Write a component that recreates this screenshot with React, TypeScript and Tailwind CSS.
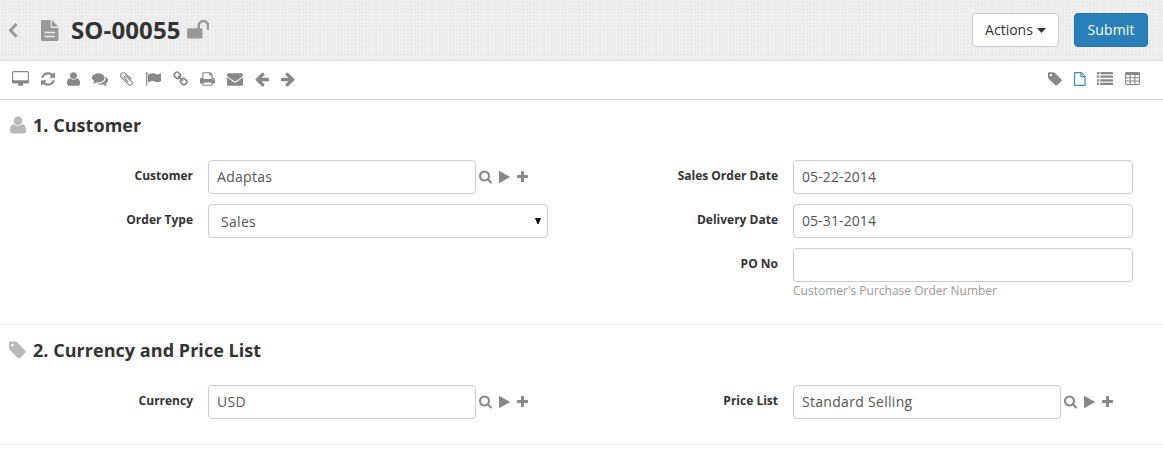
import type { ReactNode } from "react";

type IconProps = { box: string; size: string; children: ReactNode };

function Icon({ box, size, children }: IconProps) {
  return (
    <svg viewBox={box} preserveAspectRatio="none" fill="currentColor" className={`shrink-0 ${size}`}>
      {children}
    </svg>
  );
}

const userShape = (
  <path
    transform="translate(0 1536) scale(1 -1)"
    d="M1408 131q0-120-73-189.5t-194-69.5h-874q-121 0-194 69.5t-73 189.5q0 53 3.5 103.5t14 109t26.5 108.5t43 97.5t62 81t85.5 53.5t111.5 20q9 0 42-21.5t74.5-48t108-48t133.5-21.5t133.5 21.5t108 48t74.5 48t42 21.5q61 0 111.5-20t85.5-53.5t62-81t43-97.5t26.5-108.5t14-109t3.5-103.5zM1088 1024q0-159-112.5-271.5t-271.5-112.5t-271.5 112.5t-112.5 271.5t112.5 271.5t271.5 112.5t271.5-112.5t112.5-271.5z"
  />
);
const tagShape = (
  <path d="M576 448q0-53-37.5-90.5t-90.5-37.5-90.5 37.5-37.5 90.5 37.5 90.5 90.5 37.5 90.5-37.5 37.5-90.5zm1067 576q0 53-37 90l-491 492q-39 37-91 37-53 0-90-37l-715-716q-38-37-64.5-101t-26.5-117v-416q0-52 38-90t90-38h416q53 0 117 26.5t102 64.5l715 714q37 39 37 91z" />
);

function ToolbarLeft() {
  return (
    <div className="flex gap-3 text-[#888]">
      <Icon box="-64 0 1920 1792" size="w-[17px] h-4">
        <path d="M1728 992v-832q0-13-9.5-22.5t-22.5-9.5h-1600q-13 0-22.5 9.5t-9.5 22.5v832q0 13 9.5 22.5t22.5 9.5h1600q13 0 22.5-9.5t9.5-22.5zm128-832v1088q0 66-47 113t-113 47h-544q0 37 16 77.5t32 71 16 43.5q0 26-19 45t-45 19h-512q-26 0-45-19t-19-45q0-14 16-44t32-70 16-78h-544q-66 0-113-47t-47-113v-1088q0-66 47-113t113-47h1600q66 0 113 47t47 113z" />
      </Icon>
      <Icon box="128 0 1536 1792" size="w-[14px] h-4">
        <path d="M1639 1056q0 5-1 7-64 268-268 434.5t-478 166.5q-146 0-282.5-55t-243.5-157l-129 129q-19 19-45 19t-45-19-19-45v-448q0-26 19-45t45-19h448q26 0 45 19t19 45-19 45l-137 137q71 66 161 102t187 36q134 0 250-65t186-179q11-17 53-117 8-23 30-23h192q13 0 22.5 9.5t9.5 22.5zm25-800v448q0 26-19 45t-45 19h-448q-26 0-45-19t-19-45 19-45l138-138q-148-137-349-137-134 0-250 65t-186 179q-11 17-53 117-8 23-30 23h-199q-13 0-22.5-9.5t-9.5-22.5v-7q65-268 270-434.5t480-166.5q146 0 284 55.5t245 156.5l130-129q19-19 45-19t45 19 19 45z" />
      </Icon>
      <Icon box="0 0 1408 1792" size="w-[13px] h-4">{userShape}</Icon>
      <Icon box="0 0 1792 1792" size="w-4 h-4">
        <path d="M1408 768q0 139-94 257t-256.5 186.5-353.5 68.5q-86 0-176-16-124 88-278 128-36 9-86 16h-3q-11 0-20.5-8t-11.5-21q-1-3-1-6.5t.5-6.5 2-6l2.5-5 3.5-5.5 4-5 4.5-5 4-4.5q5-6 23-25t26-29.5 22.5-29 25-38.5 20.5-44q-124-72-195-177t-71-224q0-139 94-257t256.5-186.5 353.5-68.5 353.5 68.5 256.5 186.5 94 257zm384 256q0 120-71 224.5t-195 176.5q10 24 20.5 44t25 38.5 22.5 29 26 29.5 23 25q1 1 4 4.5t4.5 5 4 5 3.5 5.5l2.5 5 2 6 .5 6.5-1 6.5q-3 14-13 22t-22 7q-50-7-86-16-154-40-278-128-90 16-176 16-271 0-472-132 58 4 88 4 161 0 309-45t264-129q125-92 192-212t67-254q0-77-23-152 129 71 204 178t75 230z" />
      </Icon>
      <Icon box="192 0 1408 1792" size="w-[13px] h-4">
        <path d="M1596 1385q0 117-79 196t-196 79q-135 0-235-100l-777-776q-113-115-113-271 0-159 110-270t269-111q158 0 273 113l605 606q10 10 10 22 0 16-30.5 46.5t-46.5 30.5q-13 0-23-10l-606-607q-79-77-181-77-106 0-179 75t-73 181q0 105 76 181l776 777q63 63 145 63 64 0 106-42t42-106q0-82-63-145l-581-581q-26-24-60-24-29 0-48 19t-19 48q0 32 25 59l410 410q10 10 10 22 0 16-31 47t-47 31q-12 0-22-10l-410-410q-63-61-63-149 0-82 57-139t139-57q88 0 149 63l581 581q100 98 100 235z" />
      </Icon>
      <Icon box="0 0 1792 1792" size="w-4 h-4">
        <path d="M320 256q0 72-64 110v1266q0 13-9.5 22.5t-22.5 9.5h-64q-13 0-22.5-9.5t-9.5-22.5v-1266q-64-38-64-110 0-53 37.5-90.5t90.5-37.5 90.5 37.5 37.5 90.5zm1472 64v763q0 25-12.5 38.5t-39.5 27.5q-215 116-369 116-61 0-123.5-22t-108.5-48-115.5-48-142.5-22q-192 0-464 146-17 9-33 9-26 0-45-19t-19-45v-742q0-32 31-55 21-14 79-43 236-120 421-120 107 0 200 29t219 88q38 19 88 19 54 0 117.5-21t110-47 88-47 54.5-21q26 0 45 19t19 45z" />
      </Icon>
      <Icon box="64 0 1664 1792" size="w-[15px] h-4">
        <path d="M1520 1216q0-40-28-68l-208-208q-28-28-68-28-42 0-72 32 3 3 19 18.5t21.5 21.5 15 19 13 25.5 3.5 27.5q0 40-28 68t-68 28q-15 0-27.5-3.5t-25.5-13-19-15-21.5-21.5-18.5-19q-33 31-33 73 0 40 28 68l206 207q27 27 68 27 40 0 68-26l147-146q28-28 28-67zm-703-705q0-40-28-68l-206-207q-28-28-68-28-39 0-68 27l-147 146q-28 28-28 67 0 40 28 68l208 208q27 27 68 27 42 0 72-31-3-3-19-18.5t-21.5-21.5-15-19-13-25.5-3.5-27.5q0-40 28-68t68-28q15 0 27.5 3.5t25.5 13 19 15 21.5 21.5 18.5 19q33-31 33-73zm895 705q0 120-85 203l-147 146q-83 83-203 83-121 0-204-85l-206-207q-83-83-83-203 0-123 88-209l-88-88q-86 88-208 88-120 0-204-84l-208-208q-84-84-84-204t85-203l147-146q83-83 203-83 121 0 204 85l206 207q83 83 83 203 0 123-88 209l88 88q86-88 208-88 120 0 204 84l208 208q84 84 84 204z" />
      </Icon>
      <Icon box="64 0 1664 1792" size="w-[15px] h-4">
        <path d="M448 1536h896v-256h-896v256zm0-640h896v-384h-160q-40 0-68-28t-28-68v-160h-640v640zm1152 64q0-26-19-45t-45-19-45 19-19 45 19 45 45 19 45-19 19-45zm128 0v416q0 13-9.5 22.5t-22.5 9.5h-224v160q0 40-28 68t-68 28h-960q-40 0-68-28t-28-68v-160h-224q-13 0-22.5-9.5t-9.5-22.5v-416q0-79 56.5-135.5t135.5-56.5h64v-544q0-40 28-68t68-28h672q40 0 88 20t76 48l152 152q28 28 48 76t20 88v256h64q79 0 135.5 56.5t56.5 135.5z" />
      </Icon>
      <Icon box="0 0 1792 1792" size="w-4 h-4">
        <path d="M1792 710v794q0 66-47 113t-113 47h-1472q-66 0-113-47t-47-113v-794q44 49 101 87 362 246 497 345 57 42 92.5 65.5t94.5 48 110 24.5h2q51 0 110-24.5t94.5-48 92.5-65.5q170-123 498-345 57-39 100-87zm0-294q0 79-49 151t-122 123q-376 261-468 325-10 7-42.5 31t-54 38.5-52 32.5-57.5 27-50 9h-2q-23 0-50-9t-57.5-27-52-32.5-54-38.5-42.5-31q-91-64-262-182.5t-205-142.5q-62-42-117-115.5t-55-136.5q0-78 41.5-130t118.5-52h1472q65 0 112.5 47t47.5 113z" />
      </Icon>
      <Icon box="128 0 1536 1792" size="w-[14px] h-4">
        <path d="M1664 896v128q0 53-32.5 90.5t-84.5 37.5h-704l293 294q38 36 38 90t-38 90l-75 76q-37 37-90 37-52 0-91-37l-651-652q-37-37-37-90 0-52 37-91l651-650q38-38 91-38 52 0 90 38l75 74q38 38 38 91t-38 91l-293 293h704q52 0 84.5 37.5t32.5 90.5z" />
      </Icon>
      <Icon box="128 0 1536 1792" size="w-[14px] h-4">
        <path d="M1600 960q0 54-37 91l-651 651q-39 37-91 37-51 0-90-37l-75-75q-38-38-38-91t38-91l293-293h-704q-52 0-84.5-37.5t-32.5-90.5v-128q0-53 32.5-90.5t84.5-37.5h704l-293-294q-38-36-38-90t38-90l75-75q38-38 90-38 53 0 91 38l651 651q37 35 37 90z" />
      </Icon>
    </div>
  );
}

function ToolbarRight() {
  return (
    <div className="flex gap-3 text-[#888]">
      <Icon box="128 0 1536 1792" size="w-[14px] h-4">{tagShape}</Icon>
      <Icon box="0 0 11 16" size="w-[11px] h-4 text-[#428bca] overflow-visible">
        <path
          fillRule="evenodd"
          d="M.6 1H7.6L11.6 5V14.4Q11.6 15 11 15H.6Q0 15 0 14.4V1.6Q0 1 .6 1ZM1.2 2.2V13.8H10.4V6.2H7Q6.4 6.2 6.4 5.6V2.2ZM7.6 2.4V5H10.2Z"
        />
      </Icon>
      <Icon box="0 0 16 16" size="w-4 h-4">
        {[1, 4.6, 8.2, 11.8].map((y) => (
          <g key={y}>
            <rect x="0" y={y} width="2.3" height="2.2" rx=".2" />
            <rect x="3.4" y={y} width="12.6" height="2.2" rx=".2" />
          </g>
        ))}
      </Icon>
      <Icon box="0 0 15 16" size="w-[15px] h-4">
        <path
          fillRule="evenodd"
          d="M1.4 1H13.6Q15 1 15 2.4V12.6Q15 14 13.6 14H1.4Q0 14 0 12.6V2.4Q0 1 1.4 1ZM1.1 4V6.2H4.6V4ZM5.7 4V6.2H9.3V4ZM10.4 4V6.2H13.9V4ZM1.1 7.3V9.5H4.6V7.3ZM5.7 7.3V9.5H9.3V7.3ZM10.4 7.3V9.5H13.9V7.3ZM1.1 10.6V12.9H4.6V10.6ZM5.7 10.6V12.9H9.3V10.6ZM10.4 10.6V12.9H13.9V10.6Z"
        />
      </Icon>
    </div>
  );
}

function LinkButtons() {
  return (
    <div className="ml-[3px] flex gap-[7px] text-[#888]">
      <Icon box="64 0 1664 1792" size="w-[13px] h-[14px]">
        <path
          transform="translate(0 -64)"
          d="M1216 832q0-185-131.5-316.5t-316.5-131.5-316.5 131.5-131.5 316.5 131.5 316.5 316.5 131.5 316.5-131.5 131.5-316.5zm512 832q0 52-38 90t-90 38q-54 0-90-38l-343-342q-179 124-399 124-143 0-273.5-55.5t-225-150-150-225-55.5-273.5 55.5-273.5 150-225 225-150 273.5-55.5 273.5 55.5 225 150 150 225 55.5 273.5q0 220-124 399l343 343q37 37 37 90z"
        />
      </Icon>
      <Icon box="192 0 1408 1792" size="w-[11px] h-[14px]">
        <path d="M1576 927l-1328 738q-23 13-39.5 3t-16.5-36v-1472q0-26 16.5-36t39.5 3l1328 738q23 13 23 31t-23 31z" />
      </Icon>
      <Icon box="192 0 1408 1792" size="w-[11px] h-[14px]">
        <path d="M1600 736v192q0 40-28 68t-68 28h-416v416q0 40-28 68t-68 28h-192q-40 0-68-28t-28-68v-416h-416q-40 0-68-28t-28-68v-192q0-40 28-68t68-28h416v-416q0-40 28-68t68-28h192q40 0 68 28t28 68v416h416q40 0 68 28t28 68z" />
      </Icon>
    </div>
  );
}

type FieldProps = { label: string; value?: string; kind?: "link" | "select"; help?: string };

function Field({ label, value, kind, help }: FieldProps) {
  return (
    <div className="flex">
      <div className="w-[193px] shrink-0 pt-[7px] text-right text-xs leading-[17px] font-bold">{label}</div>
      <div className="ml-[15px] w-[340px]">
        <div className="flex items-center">
          <div
            className={`flex h-[34px] items-center rounded-[4px] border border-[#ccc] bg-white text-sm text-[#555] ${
              kind === "link"
                ? "w-[268px] pl-2 tracking-[0.3px]"
                : kind === "select"
                  ? "w-full justify-between pt-[2px] pr-1.5 pl-3 tracking-[0.3px]"
                  : "w-full pl-2 tracking-[0.1px]"
            }`}
          >
            {value}
            {kind === "select" && (
              <svg viewBox="0 0 6 6" className="mb-0.5 h-1.5 w-1.5 fill-black">
                <path d="M0 0H6L3.5 6H2.5Z" />
              </svg>
            )}
          </div>
          {kind === "link" && <LinkButtons />}
        </div>
        {help && <div className="text-xs leading-[17px] text-[#999]">{help}</div>}
      </div>
    </div>
  );
}

export default function App() {
  return (
    <div className="h-[450px] w-[1163px] overflow-hidden bg-white font-['Open_Sans',sans-serif] text-[#333]">
      <header className="flex h-[61px] items-center justify-between border-b border-[#d6d6d6] bg-[#ebebeb] bg-[repeating-linear-gradient(#ffffff38_0_1px,transparent_1px_3px,#ffffff20_3px_4px,transparent_4px_7px),repeating-linear-gradient(90deg,#ffffff38_0_1px,transparent_1px_3px,#ffffff20_3px_4px,transparent_4px_7px)] pr-[15px] pl-2">
        <div className="flex items-center">
          <svg viewBox="0 0 10 16" className="h-4 w-[10px] fill-none stroke-[#999]" strokeWidth="3">
            <path d="M8.5 1.9 2.6 8.3 8.5 14.7" />
          </svg>
          <svg viewBox="0 0 17.5 21" className="ml-[23px] h-[21px] w-[17.5px] fill-[#999]">
            <path
              fillRule="evenodd"
              d="M1.2 0H9.6V6.8Q9.6 8 10.8 8H17.5V19.8Q17.5 21 16.3 21H1.2Q0 21 0 19.8V1.2Q0 0 1.2 0ZM10.8 0 17.2 6.6H10.8ZM3.5 11.8V13.2H14V11.8ZM3.5 15.8V17.2H14V15.8Z"
            />
          </svg>
          <h1 className="ml-[12.5px] text-2xl leading-6 font-bold tracking-[0.12px]">SO-00055</h1>
          <svg viewBox="64 0 1664 1792" className="ml-1.5 h-6 w-[22.5px] fill-[#999]">
            <path d="M1728 576v256q0 26-19 45t-45 19h-64q-26 0-45-19t-19-45v-256q0-106-75-181t-181-75-181 75-75 181v192h96q40 0 68 28t28 68v576q0 40-28 68t-68 28h-960q-40 0-68-28t-28-68v-576q0-40 28-68t68-28h672v-192q0-185 131.5-316.5t316.5-131.5 316.5 131.5 131.5 316.5z" />
          </svg>
        </div>
        <div className="flex gap-[15px]">
          <button className="flex h-[34px] w-[87px] items-center justify-center rounded-[4px] border border-[#ccc] bg-white text-sm">
            Actions
            <svg viewBox="0 0 9 5" className="ml-1 h-[5px] w-[9px] fill-[#333]">
              <path d="M0 0H9L4.5 5Z" />
            </svg>
          </button>
          <button className="h-[34px] w-[74px] rounded-[4px] border border-[#2472a4] bg-[#2980b9] text-sm tracking-[0.15px] text-white">
            Submit
          </button>
        </div>
      </header>
      <div className="flex h-[39px] items-start justify-between border-b border-[#d9d9d9] pt-[10px] pr-[23px] pl-3">
        <ToolbarLeft />
        <ToolbarRight />
      </div>
      <section className="h-[225px] border-b border-[#eee]">
        <div className="flex h-[50px] items-center pl-[10px] text-[#b8b8b8]">
          <Icon box="0 0 1408 1792" size="w-4 h-5">{userShape}</Icon>
          <h2 className="ml-[7px] text-lg font-bold tracking-[0.04px] text-[#333]">1. Customer</h2>
        </div>
        <div className="mt-[10px] grid grid-cols-[585px_578px]">
          <div className="flex flex-col gap-[10px]">
            <Field label="Customer" value="Adaptas" kind="link" />
            <Field label="Order Type" value="Sales" kind="select" />
          </div>
          <div className="flex flex-col gap-[10px]">
            <Field label="Sales Order Date" value="05-22-2014" />
            <Field label="Delivery Date" value="05-31-2014" />
            <Field label="PO No" help="Customer's Purchase Order Number" />
          </div>
        </div>
      </section>
      <section className="h-[120px] border-b border-[#eee]">
        <div className="flex h-[50px] items-center pl-[9px] text-[#b8b8b8]">
          <Icon box="128 0 1536 1792" size="w-[17px] h-5">{tagShape}</Icon>
          <h2 className="ml-[7px] text-lg font-bold tracking-[0.04px] text-[#333]">2. Currency and Price List</h2>
        </div>
        <div className="mt-[10px] grid grid-cols-[585px_578px]">
          <Field label="Currency" value="USD" kind="link" />
          <Field label="Price List" value="Standard Selling" kind="link" />
        </div>
      </section>
    </div>
  );
}
